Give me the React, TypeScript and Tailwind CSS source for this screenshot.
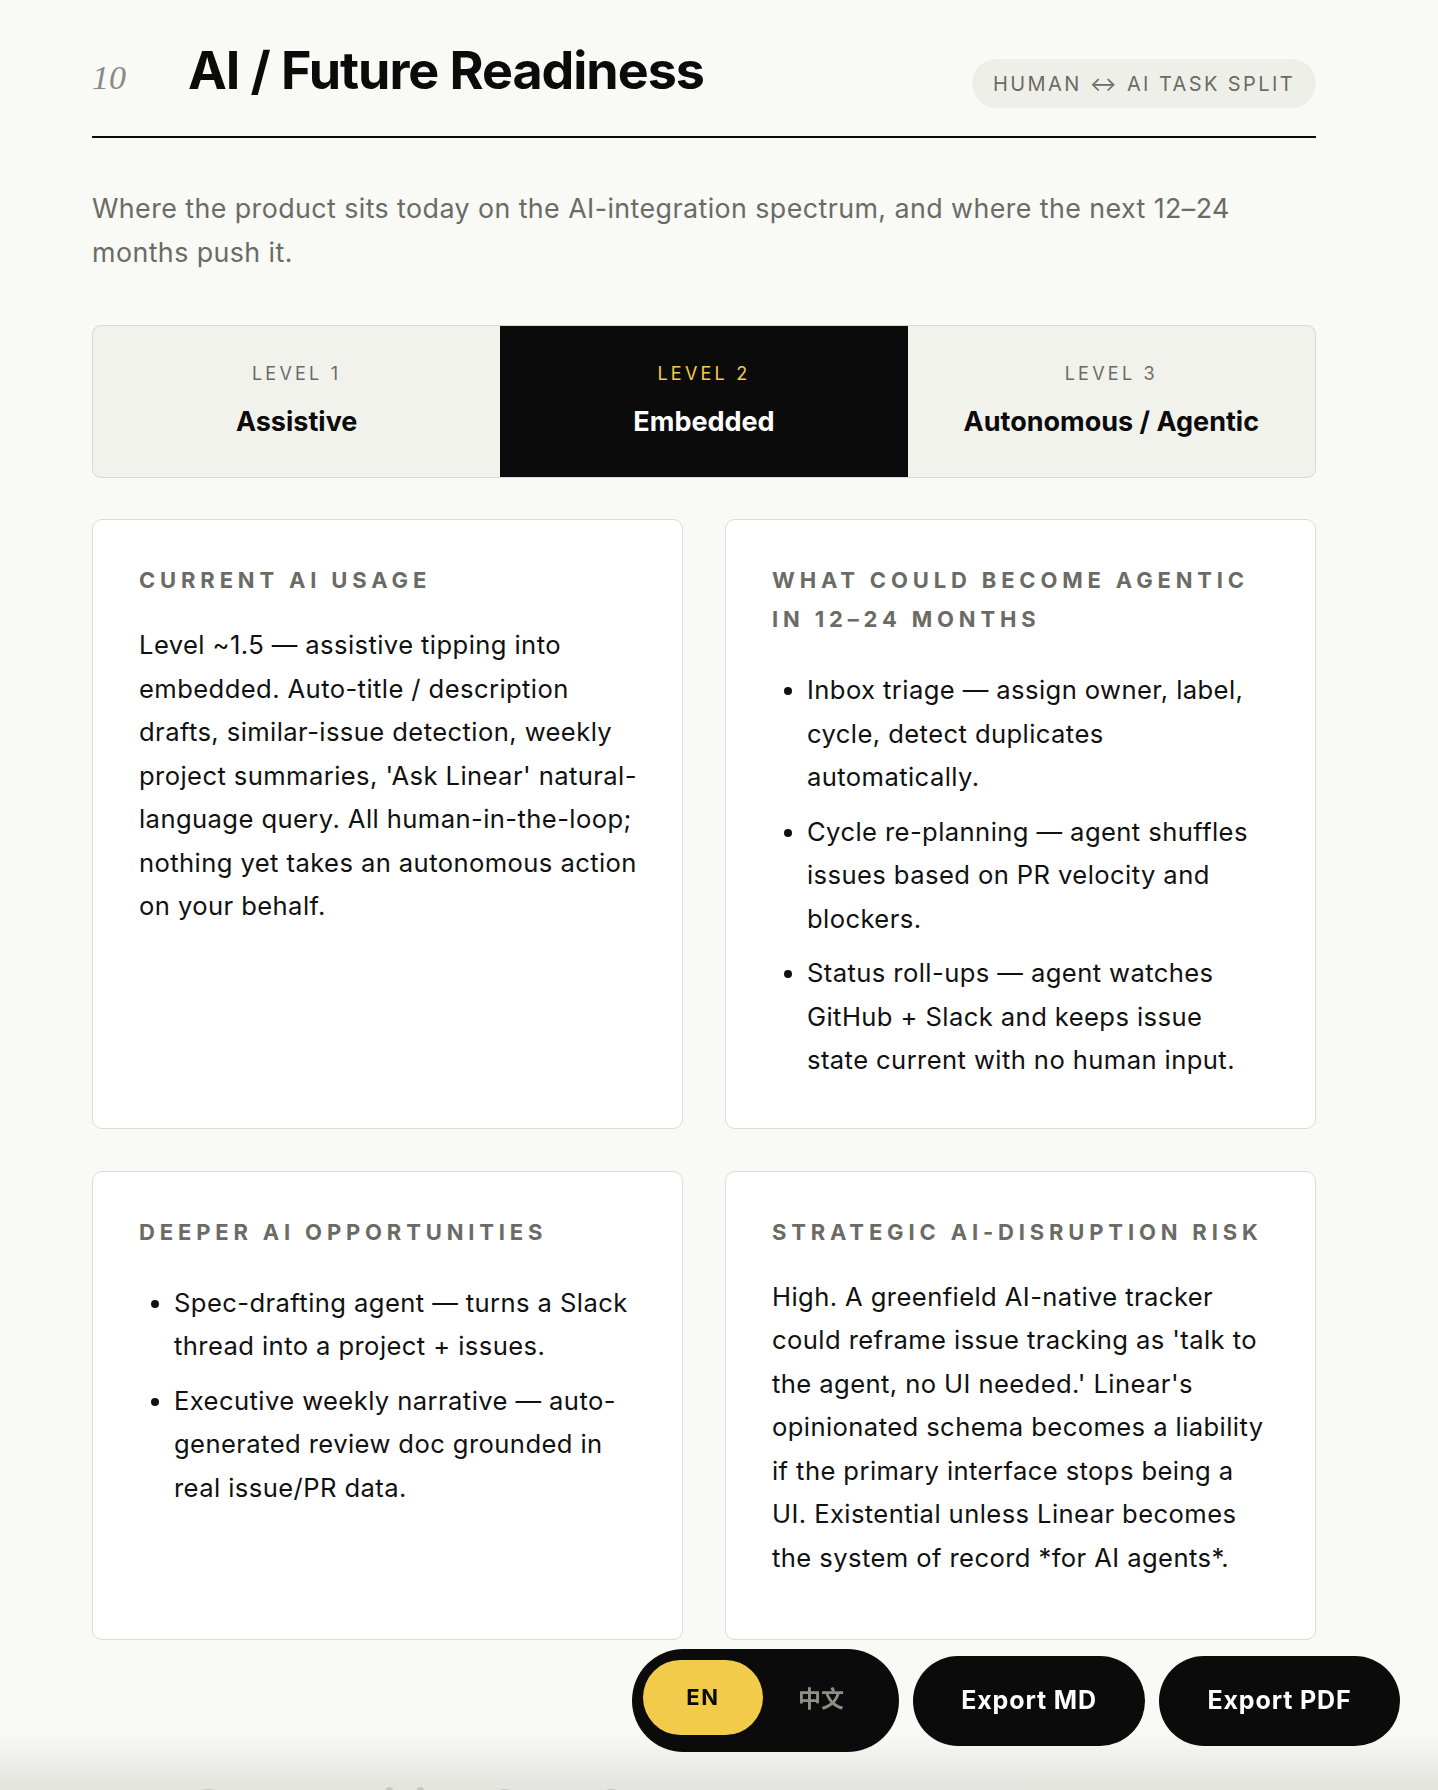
import { ReactNode } from "react";

type Level = { n: number; name: string; active?: boolean };

const levels: Level[] = [
  { n: 1, name: "Assistive" },
  { n: 2, name: "Embedded", active: true },
  { n: 3, name: "Autonomous / Agentic" },
];

function Card({ title, wide, children }: { title: string; wide?: boolean; children: ReactNode }) {
  return (
    <div
      className={`rounded-[10px] border border-[#dcdcd6] bg-white pt-[41px] pb-[46px] pl-[46px] ${
        wide ? "pr-[40px]" : "pr-[47px]"
      }`}
    >
      <h3 className="text-[22px] font-bold uppercase leading-[39px] tracking-[0.22em] text-[#6b6b65]">
        {title}
      </h3>
      {children}
    </div>
  );
}

function Body({ children }: { children: ReactNode }) {
  return (
    <p className="mt-[23px] mb-[14px] text-[25.6px] leading-[43.5px] tracking-[0.016em] text-[#111]">
      {children}
    </p>
  );
}

function Bullets({ items }: { items: string[] }) {
  return (
    <ul className="mt-[29px] list-disc space-y-[11px] pl-[35px] text-[25.6px] leading-[43.5px] tracking-[0.016em] text-[#111]">
      {items.map((t) => (
        <li key={t}>{t}</li>
      ))}
    </ul>
  );
}

function SectionHead({ num, title, tag }: { num: string; title: string; tag?: string }) {
  return (
    <header className="flex items-start justify-between border-b-2 border-[#0b0b0b] pb-[28px]">
      <div className="flex items-baseline">
        <span className="w-[96px] font-['Liberation_Serif',serif] text-[34px] italic text-[#8a8a84]">{num}</span>
        <h2 className="text-[52px] font-bold leading-[1.2] tracking-[-0.02em] text-[#0b0b0b]">{title}</h2>
      </div>
      {tag && (
        <span className="mt-[19px] flex h-[49px] items-center rounded-full bg-[#efefea] px-[21px] text-[20px] tracking-[0.12em] text-[#6b6b65]">
          {tag}
        </span>
      )}
    </header>
  );
}

export default function App() {
  return (
    <div className="min-h-screen bg-[#f9f9f5] font-['Inter',sans-serif] text-[#111]">
      <section className="ml-[92px] w-[1224px] pt-[40px] pb-[98px]">
        <SectionHead num="10" title="AI / Future Readiness" tag="HUMAN ↔ AI TASK SPLIT" />

        <p className="mt-[48px] max-w-[1180px] text-[26.8px] leading-[44px] tracking-[0.016em] text-[#6b6b65]">
          Where the product sits today on the AI-integration spectrum, and where the next 12–24 months push it.
        </p>

        {/* maturity scale */}
        <div className="mt-[51px] grid grid-cols-3 overflow-hidden rounded-[9px] border border-[#d9d9d3] bg-[#f2f2ed]">
          {levels.map((l) => (
            <div
              key={l.n}
              className={`flex flex-col items-center pt-[36px] pb-[38px] ${l.active ? "bg-[#0b0b0b]" : ""}`}
            >
              <span
                className={`text-[18px] leading-[24px] tracking-[0.18em] ${
                  l.active ? "text-[#f2cb4a]" : "text-[#6b6b65]"
                }`}
              >
                LEVEL {l.n}
              </span>
              <span
                className={`mt-[19px] text-[27px] font-bold leading-[34px] ${
                  l.active ? "text-white" : "text-[#0b0b0b]"
                }`}
              >
                {l.name}
              </span>
            </div>
          ))}
        </div>

        <div className="mt-[41px] grid grid-cols-2 gap-[42px]">
          <Card title="Current AI usage" wide>
            <Body>
              Level ~1.5 — assistive tipping into embedded. Auto-title / description drafts, similar-issue
              detection, weekly project summaries, 'Ask Linear' natural-language query. All human-in-the-loop;
              nothing yet takes an autonomous action on your behalf.
            </Body>
          </Card>
          <Card title="What could become agentic in 12–24 months">
            <Bullets
              items={[
                "Inbox triage — assign owner, label, cycle, detect duplicates automatically.",
                "Cycle re-planning — agent shuffles issues based on PR velocity and blockers.",
                "Status roll-ups — agent watches GitHub + Slack and keeps issue state current with no human input.",
              ]}
            />
          </Card>
          <Card title="Deeper AI opportunities" wide>
            <Bullets
              items={[
                "Spec-drafting agent — turns a Slack thread into a project + issues.",
                "Executive weekly narrative — auto-generated review doc grounded in real issue/PR data.",
              ]}
            />
          </Card>
          <Card title="Strategic AI-disruption risk">
            <Body>
              High. A greenfield AI-native tracker could reframe issue tracking as 'talk to the agent, no UI
              needed.' Linear's opinionated schema becomes a liability if the primary interface stops being a
              UI. Existential unless Linear becomes the system of record *for AI agents*.
            </Body>
          </Card>
        </div>
      </section>

      <section className="ml-[92px] w-[1224px] pt-[40px] pb-[200px]">
        <SectionHead num="11" title="Competitive Landscape" />
      </section>

      {/* bottom fade */}
      <div className="pointer-events-none fixed inset-x-0 bottom-0 h-[56px] bg-gradient-to-b from-[#f9f9f5]/0 to-[#e0e0db]/90" />

      {/* floating toolbar */}
      <div className="fixed right-[38px] bottom-[38px] flex items-center gap-[14px]">
        <div className="flex h-[103px] w-[267px] items-start rounded-full bg-[#0b0b0b] pt-[11px] pl-[11px]">
          <button className="flex h-[75px] w-[120px] items-center justify-center rounded-full bg-[#f2cb4a] text-[22px] font-bold tracking-[0.08em] text-[#0b0b0b]">
            EN
          </button>
          <button className="flex h-[75px] flex-1 items-center justify-center pr-[20px] font-['Noto_Sans_CJK_SC',sans-serif] text-[23px] font-semibold text-[#8f8f88]">
            中文
          </button>
        </div>
        <button className="h-[90px] w-[232px] rounded-full bg-[#0b0b0b] text-[25px] font-bold tracking-[0.035em] text-white">
          Export MD
        </button>
        <button className="h-[90px] w-[241px] rounded-full bg-[#0b0b0b] text-[25px] font-bold tracking-[0.035em] text-white">
          Export PDF
        </button>
      </div>
    </div>
  );
}
